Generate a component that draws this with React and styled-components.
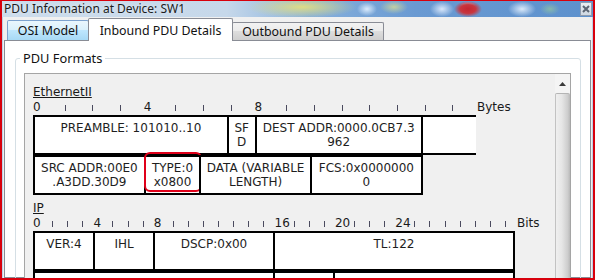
import React from 'react'
import styled, { createGlobalStyle } from 'styled-components'

const ETH_W = 27.7;
const IP_W = 15;

const ethernet = {
    title: 'EthernetII',
    unit: 'Bytes',
    slots: 16,
    rulerW: ETH_W,
    cellW: ETH_W,
    labels: { 0: '0', 4: '4', 8: '8' },
    rows: [
        [
            { n: 7, text: 'PREAMBLE: 101010..10' },
            { n: 1, text: 'SF\nD' },
            { n: 6, text: 'DEST ADDR:0000.0CB7.3\n962' },
            { n: 2, text: '', open: true },
        ],
        [
            { n: 4, text: 'SRC ADDR:00E0\n.A3DD.30D9' },
            { n: 2, text: 'TYPE:0\nx0800', marked: true },
            { n: 4, text: 'DATA (VARIABLE\nLENGTH)' },
            { n: 4, text: 'FCS:0x0000000\n0' },
        ],
    ],
};

// second IP row is only visible as its top border, below the fold
const ip = {
    title: 'IP',
    unit: 'Bits',
    slots: 32,
    rulerW: 15.1,
    cellW: IP_W,
    labels: { 0: '0', 4: '4', 8: '8', 16: '16', 20: '20', 24: '24' },
    rows: [
        [
            { n: 4, text: 'VER:4' },
            { n: 4, text: 'IHL' },
            { n: 8, text: 'DSCP:0x00' },
            { n: 16, text: 'TL:122' },
        ],
        [
            { n: 16, text: '' },
            { n: 4, text: '' },
            { n: 12, text: '' },
        ],
    ],
};

const App = () => {
    return (
        <>
            <GlobalStyle />
            <Frame>
                <TitleBar>
                    <Title>PDU Information at Device: SW1</Title>
                    <CloseButton>
                        <svg width="8" height="8" viewBox="0 0 8 8">
                            <path d="M1 1 L7 7 M7 1 L1 7" stroke="#5b6573" strokeWidth="2" />
                        </svg>
                    </CloseButton>
                </TitleBar>
                <Client>
                    <TabRow>
                        <Tab $w={82} $h={20} $kind="hover">OSI Model</Tab>
                        <Tab $w={145} $h={23} $kind="active">Inbound PDU Details</Tab>
                        <Tab $w={152} $h={18}>Outbound PDU Details</Tab>
                    </TabRow>
                    <Panel>
                        <Group>
                            <Legend>PDU Formats</Legend>
                            <ScrollPane>
                                <Content>
                                    <Section data={ethernet} />
                                    <Section data={ip} />
                                </Content>
                                <ScrollBar>
                                    <UpButton>
                                        <svg width="7" height="4" viewBox="0 0 7 4">
                                            <path d="M0 4 L3.5 0 L7 4 Z" fill="#3a3a3a" />
                                        </svg>
                                    </UpButton>
                                    <Thumb />
                                </ScrollBar>
                            </ScrollPane>
                        </Group>
                    </Panel>
                </Client>
            </Frame>
        </>
    )
};

const Section = ({ data }) => (
    <Block>
        <BlockTitle>{data.title}</BlockTitle>
        <Ruler>
            {Array.from({ length: data.slots }, (_, i) => (
                <Slot key={i} $w={data.rulerW}>
                    {data.labels[i] !== undefined ? data.labels[i] : <Tick />}
                </Slot>
            ))}
            <Unit>{data.unit}</Unit>
        </Ruler>
        {data.rows.map((row, r) => (
            <Row key={r}>
                {row.map((c, i) => (
                    <Cell key={i} $w={c.n * data.cellW} $open={c.open}>
                        {c.text}
                        {c.marked && <Mark />}
                    </Cell>
                ))}
            </Row>
        ))}
    </Block>
);

const GlobalStyle = createGlobalStyle`
    html, body {
        margin: 0;
        padding: 0;
        background: #fff;
    }
    body {
        font-family: "Noto Sans", sans-serif;
    }
`;

const Frame = styled.div`
    width: 595px;
    height: 280px;
    box-sizing: border-box;
    border: 2px solid #d8000c;
    border-top-width: 1px;
    overflow: hidden;
    display: flex;
    flex-direction: column;
    background: #bcd0e6;
`;

const TitleBar = styled.div`
    height: 16px;
    flex-shrink: 0;
    display: flex;
    align-items: flex-start;
    justify-content: space-between;
    padding: 0 1px 0 2px;
    background:
        radial-gradient(ellipse 14px 8px at 466px 8px, #c42630 0%, #c8363f 55%, rgba(200, 60, 60, 0) 100%),
        radial-gradient(ellipse 8px 3px at 466px 4px, rgba(255, 255, 255, 0.9), rgba(255, 255, 255, 0)),
        radial-gradient(ellipse 55px 11px at 300px 6px, rgba(226, 222, 130, 0.95), rgba(226, 222, 130, 0)),
        radial-gradient(ellipse 10px 7px at 365px 8px, rgba(225, 240, 255, 0.95), rgba(225, 240, 255, 0)),
        radial-gradient(ellipse 14px 7px at 392px 6px, rgba(215, 220, 150, 0.8), rgba(215, 220, 150, 0)),
        radial-gradient(ellipse 12px 8px at 440px 8px, rgba(230, 240, 255, 0.9), rgba(230, 240, 255, 0)),
        radial-gradient(ellipse 14px 8px at 520px 8px, rgba(225, 238, 252, 0.95), rgba(225, 238, 252, 0)),
        radial-gradient(ellipse 10px 6px at 548px 8px, rgba(150, 200, 160, 0.7), rgba(150, 200, 160, 0)),
        linear-gradient(to right, #ccdcec 0%, #c6d8ea 38%, #86b0dc 52%, #6a9ad2 70%, #5d91cd 100%);
`;

const Title = styled.div`
    font-family: "Noto Sans", sans-serif;
    font-size: 12px;
    line-height: 16px;
    color: #1c1c1c;
    text-shadow: 0 0 4px rgba(255, 255, 255, 0.7);
    white-space: nowrap;
`;

const CloseButton = styled.div`
    width: 12px;
    height: 14px;
    margin-top: 1px;
    box-sizing: border-box;
    border: 1px solid #8d9cb0;
    background: linear-gradient(#e8edf3, #cfd8e2);
    display: flex;
    align-items: center;
    justify-content: center;
`;

const Client = styled.div`
    flex: 1;
    margin: 0 1px;
    padding: 0 1px;
    background: #f0f0f0;
    display: flex;
    flex-direction: column;
    min-height: 0;
`;

const TabRow = styled.div`
    height: 24px;
    flex-shrink: 0;
    display: flex;
    align-items: flex-end;
    padding-left: 3px;
    position: relative;
    z-index: 1;
`;

const tabBackgrounds = {
    active: '#ffffff',
    hover: 'linear-gradient(#eaf6fd 0%, #d9f0fc 50%, #bee6fd 50%, #a7d9f5 100%)',
    normal: 'linear-gradient(#f2f2f2 0%, #ebebeb 50%, #dddddd 50%, #cfcfcf 100%)',
};

const Tab = styled.div`
    width: ${p => p.$w}px;
    height: ${p => p.$h}px;
    box-sizing: border-box;
    margin-bottom: ${p => (p.$kind === 'active' ? 0 : 1)}px;
    margin-left: ${p => (p.$kind === 'active' ? -1 : 0)}px;
    margin-right: ${p => (p.$kind === 'active' ? -1 : 0)}px;
    border: 1px solid ${p => (p.$kind === 'hover' ? '#7da2ce' : '#898c95')};
    border-bottom: 0;
    border-radius: 2px 2px 0 0;
    background: ${p => tabBackgrounds[p.$kind || 'normal']};
    font-family: "Noto Sans", sans-serif;
    font-size: 12.4px;
    color: #111;
    display: flex;
    align-items: center;
    justify-content: center;
    white-space: nowrap;
    position: relative;
    z-index: ${p => (p.$kind === 'active' ? 2 : 1)};
`;

const Panel = styled.div`
    flex: 1;
    margin-top: -1px;
    background: #fff;
    border: 1px solid #898c95;
    padding: 8px 9px 0 10px;
    min-height: 0;
`;

const Group = styled.fieldset`
    margin: 0;
    border: 1px solid #d5dfe5;
    border-radius: 3px;
    padding: 6px 9px 0 8px;
    min-width: 0;
`;

const Legend = styled.legend`
    font-family: "Noto Sans", sans-serif;
    font-size: 12.8px;
    color: #111;
    padding: 0 3px;
    margin-left: -4px;
`;

const ScrollPane = styled.div`
    display: flex;
    height: 230px;
    border: 1px solid #a5a5a5;
    background: #f0f0f0;
`;

const Content = styled.div`
    flex: 1;
    padding: 11px 0 0 8px;
    min-width: 0;
`;

const ScrollBar = styled.div`
    width: 15px;
    flex-shrink: 0;
    display: flex;
    flex-direction: column;
`;

const UpButton = styled.div`
    height: 19px;
    flex-shrink: 0;
    background: #f4f4f4;
    display: flex;
    align-items: center;
    justify-content: center;
`;

const Thumb = styled.div`
    flex: 1;
    box-sizing: border-box;
    border-top: 1px solid #b4b4b4;
    border-radius: 2px 2px 0 0;
    background: linear-gradient(to right, #c2c2c2 0, #c2c2c2 1px, #efefef 1px, #e6e6e6 45%, #cdcdcd 85%, #b9b9b9 100%);
`;

const Block = styled.div`
    margin-bottom: 6px;
    font-family: "DejaVu Sans", sans-serif;
    font-size: 12px;
    color: #1a1a1a;
`;

const BlockTitle = styled.div`
    line-height: 15px;
    text-decoration: underline;
`;

const Ruler = styled.div`
    display: flex;
    line-height: 15px;
    white-space: nowrap;
`;

const Slot = styled.div`
    width: ${p => p.$w}px;
    flex-shrink: 0;
`;

const Tick = styled.span`
    display: inline-block;
    width: 1px;
    height: 6px;
    margin-left: 4px;
    background: #4a4a5e;
`;

const Unit = styled.div`
    margin-left: 1px;
`;

const Row = styled.div`
    display: flex;
`;

const Cell = styled.div`
    width: ${p => (p.$open ? p.$w : p.$w + 2)}px;
    height: 40px;
    flex-shrink: 0;
    box-sizing: border-box;
    margin-right: -2px;
    border: 2px solid #000;
    border-right-width: ${p => (p.$open ? 0 : 2)}px;
    background: #fff;
    padding-top: 4px;
    text-align: center;
    white-space: pre-line;
    line-height: 14px;
    color: #1e1e1e;
    position: relative;
`;

const Mark = styled.span`
    position: absolute;
    top: -5px;
    left: -2px;
    width: 58px;
    height: 40px;
    box-sizing: border-box;
    border: 2px solid #e0001a;
    border-radius: 6px;
    pointer-events: none;
`;

export default App
